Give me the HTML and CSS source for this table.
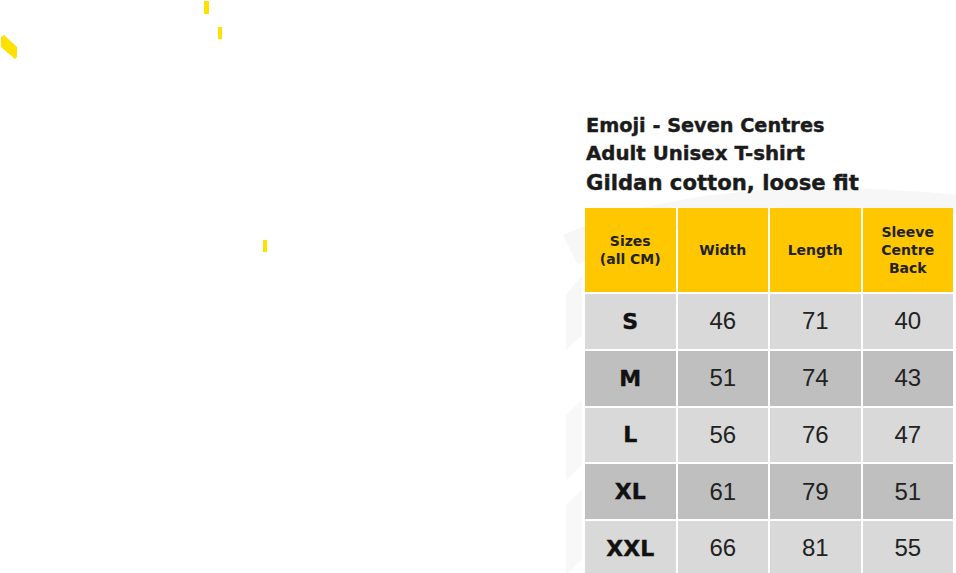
FILE: index.html
```html
<!DOCTYPE html>
<html lang="en">
<head>
<meta charset="utf-8">
<title>Emoji - Seven Centres size chart</title>
<link rel="stylesheet" href="styles.css">
</head>
<body>
<div class="page">
  <svg class="marks" width="300" height="260" viewBox="0 0 300 260" aria-hidden="true">
    <polygon points="1,37 4,35 17,47 17,57 15,59 1,47" fill="#ffe100"/>
    <rect x="204" y="1" width="5" height="13" fill="#ffe100"/>
    <rect x="218" y="27" width="4" height="12" fill="#ffe100"/>
    <rect x="263" y="240" width="4" height="12" fill="#ffe100"/>
  </svg>
  <svg class="watermark" width="420" height="400" viewBox="0 0 420 400" aria-hidden="true">
    <path d="M5 60 Q 150 -5 400 20 L 410 40 Q 160 20 20 90 Z" fill="#f7f7f7"/>
    <path d="M8 120 L 24 100 L 24 160 L 8 175 Z" fill="#f7f7f7"/>
    <path d="M8 240 L 24 225 L 24 290 L 8 305 Z" fill="#f8f8f8"/>
    <path d="M8 330 L 24 315 L 24 385 L 8 400 Z" fill="#f8f8f8"/>
  </svg>
  <section class="chart">
    <h1 class="title">
      <span class="t1">Emoji - Seven Centres</span>
      <span class="t2">Adult Unisex T-shirt</span>
      <span class="t3">Gildan cotton, loose fit</span>
    </h1>
    <div class="table">
      <div class="cell head">Sizes<br>(all CM)</div>
      <div class="cell head">Width</div>
      <div class="cell head">Length</div>
      <div class="cell head">Sleeve<br>Centre<br>Back</div>

      <div class="cell light size">S</div>
      <div class="cell light">46</div>
      <div class="cell light">71</div>
      <div class="cell light">40</div>

      <div class="cell dark size">M</div>
      <div class="cell dark">51</div>
      <div class="cell dark">74</div>
      <div class="cell dark">43</div>

      <div class="cell light size">L</div>
      <div class="cell light">56</div>
      <div class="cell light">76</div>
      <div class="cell light">47</div>

      <div class="cell dark size">XL</div>
      <div class="cell dark">61</div>
      <div class="cell dark">79</div>
      <div class="cell dark">51</div>

      <div class="cell light size">XXL</div>
      <div class="cell light">66</div>
      <div class="cell light">81</div>
      <div class="cell light">55</div>
    </div>
  </section>
</div>
</body>
</html>
```

FILE: styles.css
```css
* { box-sizing: border-box; }
html, body {
  margin: 0;
  padding: 0;
  background: #ffffff;
  overflow: hidden;
}
.page {
  position: relative;
  width: 956px;
  height: 573px;
  display: flex;
  justify-content: flex-end;
  font-family: "Liberation Sans", Arial, sans-serif;
  color: #1a1a1a;
}
.marks {
  position: absolute;
  left: 0;
  top: 0;
}
.watermark {
  position: absolute;
  left: 558px;
  top: 175px;
}
.chart {
  position: relative;
  width: 368px;
  margin-right: 3px;
  padding-top: 112px;
}
.title {
  margin: 0 0 0 1px;
  font-family: "DejaVu Sans", sans-serif;
  font-weight: 700;
  display: flex;
  flex-direction: column;
  color: #1b1b1b;
  -webkit-text-stroke: 0.4px #1b1b1b;
}
.t1, .t2 {
  font-size: 19.3px;
  line-height: 28px;
}
.t2 { font-size: 19.8px; }
.t3 {
  font-size: 21.2px;
  line-height: 30px;
}
.table {
  margin-top: 10px;
  display: grid;
  grid-template-columns: repeat(4, 1fr);
  grid-template-rows: 84px repeat(5, 54.75px);
  gap: 2px;
}
.cell {
  display: flex;
  align-items: center;
  justify-content: center;
  text-align: center;
  font-size: 24px;
  color: #222;
}
.head {
  background: #ffc700;
  font-family: "DejaVu Sans", sans-serif;
  font-weight: 700;
  font-size: 14px;
  line-height: 18px;
  color: #222;
}
.light { background: #d9d9d9; }
.dark { background: #bfbfbf; }
.size {
  font-family: "DejaVu Sans", sans-serif;
  font-weight: 700;
  font-size: 22px;
  color: #111;
  -webkit-text-stroke: 0.4px #111;
}
```
